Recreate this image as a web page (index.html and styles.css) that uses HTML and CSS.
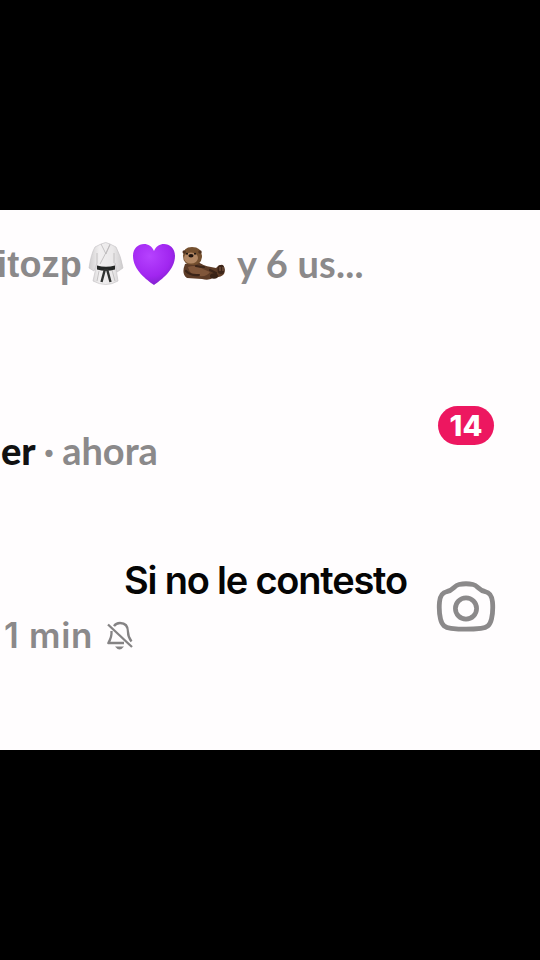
FILE: index.html
```html
<!DOCTYPE html>
<html lang="es">
<head>
<meta charset="utf-8">
<title>Mensajes</title>
<link rel="stylesheet" href="styles.css">
</head>
<body>
<main class="screen">
  <section class="row row-activity">
    <span class="name">itozp</span>
    <svg class="gi" viewBox="0 0 36 46" aria-hidden="true">
      <defs>
        <linearGradient id="cloth" x1="0" x2="1"><stop offset="0" stop-color="#cfcdce"/><stop offset=".3" stop-color="#f1eff0"/><stop offset=".7" stop-color="#eae8e9"/><stop offset="1" stop-color="#cecccd"/></linearGradient>
      </defs>
      <path d="M13 3 Q18 0 22 3 L28 6 Q33 15 35 27 L29 31 L27 22 L30 40 Q18 47 5 40 L9 22 L6 30 L1 27 Q3 13 7 6Z" fill="url(#cloth)" stroke="#c9c6c8" stroke-width=".7"/>
      <path d="M13 3 L18 13 L22 3 M22 4 L12 23 M9 12V22 M26 12V22 M11 30L9 40 M24 29L27 40" fill="none" stroke="#bab7b9" stroke-width=".8"/>
      <path d="M9 24.5 Q18 27 27 24.5 V28.5 Q18 31 9 28.5Z" fill="#242625"/>
      <path d="M17 28 L13.5 41 M19 28 L22.5 41" stroke="#303231" stroke-width="2.4"/>
    </svg>
    <svg class="heart" viewBox="0 0 44 43" aria-hidden="true">
      <defs>
        <radialGradient id="violet" cx=".4" cy=".3" r=".75"><stop offset="0" stop-color="#b642ff"/><stop offset=".65" stop-color="#a126f0"/><stop offset="1" stop-color="#7c20c8"/></radialGradient>
      </defs>
      <path d="M22 42 C15 37 1 27 1 13 C1 -1 18 -3 22 8 C26 -3 43 -1 43 13 C43 27 29 37 22 42Z" fill="url(#violet)"/>
    </svg>
    <svg class="otter" viewBox="0 0 44 34" aria-hidden="true">
      <path d="M3 17 L15 14 Q21 19 29 20 L34 21 Q37 17 41 18 Q44 22 42 27 Q38 31 32 30 Q28 34 20 32 L5 31 Q-1 27 3 17Z" fill="#5d3b26"/>
      <path d="M6 20 Q14 17 21 22 L28 25 Q25 30 17 29 Q8 29 6 20Z" fill="#80563a"/>
      <path d="M1 9 Q1 0 10 0 Q20 0 20 10 Q19 18 11 18 Q1 18 1 9Z" fill="#75502f"/>
      <ellipse cx="9" cy="11" rx="7" ry="5.6" fill="#b28763"/>
      <circle cx="2.2" cy="5" r="1.7" fill="#50321f"/><circle cx="18" cy="5" r="1.7" fill="#50321f"/>
      <circle cx="5" cy="6.7" r="1" fill="#17110d"/><circle cx="13" cy="6.7" r="1" fill="#17110d"/>
      <ellipse cx="9" cy="8.8" rx="2.6" ry="1.7" fill="#20140e"/>
      <path d="M14 19 Q18 20 22 20 M4 24 Q9 29 17 28 M28 23 L34 26" fill="none" stroke="#3b2418" stroke-width="2.2" stroke-linecap="round"/>
      <ellipse cx="39" cy="22.5" rx="3.5" ry="4.5" fill="#3d2519"/><ellipse cx="32" cy="29" rx="4" ry="2.7" fill="#392216"/>
      <path d="M38 20V24 M41 20V24" stroke="#886048"/>
    </svg>
    <span class="others">y 6 us...</span>
  </section>
  <section class="row row-now">
    <div class="meta"><strong class="sender">er</strong><span class="dot">·</span><span class="time">ahora</span></div>
    <span class="badge">14</span>
  </section>
  <section class="row row-muted">
    <span class="ago">1 min</span>
    <svg class="bell" viewBox="0 0 28 30" aria-hidden="true">
      <path d="M8 5.2 Q10 2 14 2 Q22 2 22 11 Q22 16 25.5 20.5 M5.5 10 Q6 16 2.3 22 H18" fill="none" stroke="#858384" stroke-width="2.3" stroke-linejoin="round"/>
      <path d="M2 3.5 L26 26" stroke="#858384" stroke-width="2.3"/>
      <path d="M9 25.5 H18 Q13.5 31.5 9 25.5Z" fill="#858384"/>
    </svg>
    <svg class="camera" viewBox="0 0 60 52" aria-hidden="true">
      <path d="M11 10.5 C17 10 18 4.5 23 3.5 Q30 2 37 3.5 C42 4.5 43 10 49 10.5 C54 11.5 56 15 56.5 21 Q57.3 30 55.5 38 C54 44.5 51 46.5 45 47.3 Q30 49 15 47.3 C9 46.5 6 44.5 4.5 38 Q2.7 30 3.5 21 C4 15 6 11.5 11 10.5Z" fill="none" stroke="#8b898a" stroke-width="4.8"/>
      <circle cx="30" cy="27.5" r="10.6" fill="none" stroke="#8b898a" stroke-width="4.7"/>
    </svg>
  </section>
  <p class="caption">Si no le contesto</p>
</main>
</body>
</html>
```

FILE: styles.css
```css
body {
  margin: 0;
  background: #000;
}

.screen {
  position: relative;
  box-sizing: border-box;
  width: 540px;
  height: 540px;
  margin: 210px 0;
  overflow: hidden;
  background: #fffdfe;
  color: #8b898a;
  font-family: Lato, "Liberation Sans", sans-serif;
  font-size: 38px;
  font-weight: 700;
  line-height: 46px;
  white-space: nowrap;
}

.row {
  display: flex;
  box-sizing: border-box;
}

.row-activity {
  height: 180px;
  padding-top: 31px;
}

.name {
  width: 88px;
  margin: 1px 0 0 -3px;
  font: 700 36px/46px "Liberation Sans", sans-serif;
  letter-spacing: 0.2px;
}

.gi {
  width: 36px;
  height: 46px;
  margin-left: 3px;
}

.heart {
  width: 44px;
  height: 43px;
  margin: 2px 0 0 8px;
}

.otter {
  width: 44px;
  height: 34px;
  margin: 6px 0 0 6px;
}

.others {
  margin: -1px 0 0 11px;
  letter-spacing: 0.2px;
}

.row-now {
  height: 180px;
  padding: 16px 46px 0 0;
  justify-content: space-between;
}

.meta {
  display: flex;
  padding: 21px 0 0 1px;
}

.sender {
  color: #111;
  font-weight: 900;
}

.dot {
  margin: 0 8px;
}

.badge {
  box-sizing: border-box;
  width: 56px;
  height: 39px;
  border-radius: 20px;
  background: #ed1760;
  color: #fff;
  font: 800 29px/39px Inter, sans-serif;
  text-align: center;
}

.row-muted {
  height: 180px;
  padding: 11px 44px 0 4px;
}

.ago {
  margin-top: 31px;
  font: 600 35px/46px Inter, sans-serif;
  letter-spacing: 0.7px;
}

.bell {
  width: 28px;
  height: 30px;
  margin: 40px 0 0 13px;
}

.camera {
  width: 60px;
  height: 52px;
  margin-left: auto;
}

.caption {
  position: absolute;
  top: 347px;
  left: 124px;
  margin: 0;
  color: #050505;
  font: 600 38px/46px Inter, sans-serif;
  letter-spacing: -1.2px;
}
```
